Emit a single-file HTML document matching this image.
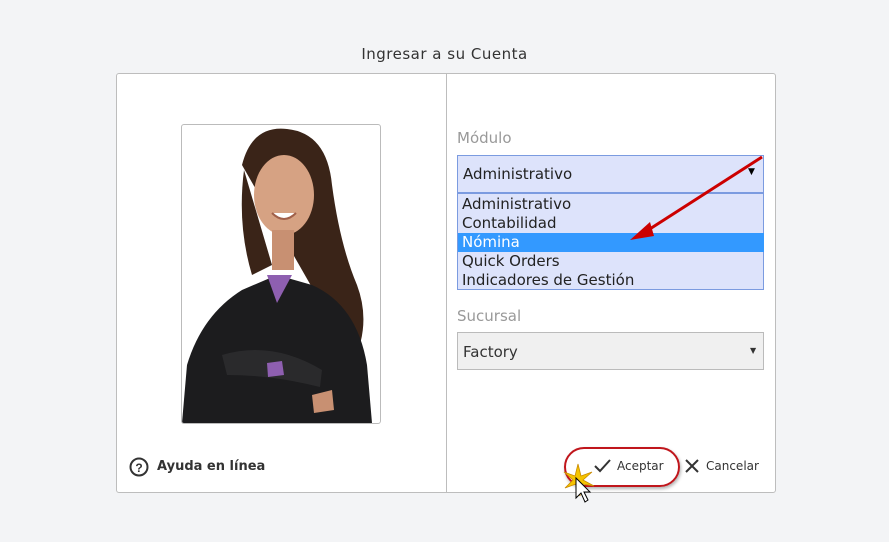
<!DOCTYPE html>
<html><head><meta charset="utf-8"><style>
body{margin:0;width:889px;height:542px;background:#f3f4f6;font-family:"DejaVu Sans","Liberation Sans",sans-serif;position:relative;overflow:hidden}
.a{position:absolute}
.t{left:0;width:889px;top:45px;text-align:center;font-size:15px;color:#333;letter-spacing:.5px}
.box{left:116px;top:73px;width:658px;height:418px;background:#fff;border:1px solid #bdbdbd;border-radius:3px}
.div{left:446px;top:74px;width:1px;height:418px;background:#bdbdbd}
.lbl{font-size:15px;color:#999}
.it{left:0;width:305px;height:19px;line-height:19px;padding-left:4px;font-size:15px;color:#222}
</style></head><body>
<div class="a t">Ingresar a su Cuenta</div>
<div class="a box"></div>
<div class="a div"></div>
<div class="a" style="left:181px;top:124px;width:198px;height:298px;border:1px solid #bbb;border-radius:3px;background:#fff;overflow:hidden">
<svg width="198" height="298" viewBox="0 0 198 298">
<path d="M60 40 Q70 0 105 4 Q145 8 150 60 Q158 120 175 160 Q190 200 170 240 L140 180 Z" fill="#3a2418"/>
<path d="M62 45 Q55 100 70 150 L90 140 Z" fill="#3a2418"/>
<path d="M0 298 L5 240 Q20 190 60 165 L95 150 L130 160 Q175 180 185 240 L190 298 Z" fill="#1c1c1e"/>
<path d="M85 150 L95 178 L110 150 Z" fill="#8e5fb0"/>
<ellipse cx="102" cy="70" rx="30" ry="40" fill="#d6a283"/>
<rect x="90" y="105" width="22" height="40" fill="#c89072"/>
<path d="M40 230 Q90 215 140 245 L138 262 Q90 250 45 250 Z" fill="#2a2a2c"/>
<path d="M85 238 L100 236 L102 250 L86 252 Z" fill="#8e5fb0"/>
<path d="M130 270 L150 265 L152 285 L132 288 Z" fill="#c89072"/>
<path d="M90 88 Q102 100 114 88" fill="#fff" stroke="#a0604a" stroke-width="2"/>
</svg></div>
<svg class="a" style="left:129px;top:457px" width="20" height="20"><circle cx="10" cy="10" r="8.5" fill="none" stroke="#333" stroke-width="2"/><text x="10" y="15" font-size="12" font-weight="bold" text-anchor="middle" fill="#333" font-family="Liberation Sans">?</text></svg>
<div class="a" style="left:157px;top:459px;font-size:13px;font-weight:bold;color:#333">Ayuda en línea</div>
<div class="a lbl" style="left:457px;top:129px">Módulo</div>
<div class="a" style="left:457px;top:155px;width:305px;height:36px;background:#dde3fb;border:1px solid #7b9be0"><span class="a" style="left:5px;top:9px;font-size:15px;color:#222">Administrativo</span><span class="a" style="left:290px;top:11px;font-size:9px">▼</span></div>
<div class="a" style="left:457px;top:193px;width:305px;height:95px;background:#dde3fb;border:1px solid #7b9be0">
<div class="a it" style="top:1px">Administrativo</div>
<div class="a it" style="top:20px">Contabilidad</div>
<div class="a it" style="top:39px;background:#3399ff;color:#fff;width:302px">Nómina</div>
<div class="a it" style="top:58px">Quick Orders</div>
<div class="a it" style="top:77px">Indicadores de Gestión</div>
</div>
<svg class="a" style="left:620px;top:150px" width="150" height="100"><line x1="142" y1="7" x2="22" y2="84" stroke="#c00" stroke-width="3"/><path d="M10 90 L30 72 L34 86 Z" fill="#c00"/></svg>
<div class="a lbl" style="left:457px;top:307px">Sucursal</div>
<div class="a" style="left:457px;top:332px;width:305px;height:36px;background:#f0f0f0;border:1px solid #bbb"><span class="a" style="left:5px;top:10px;font-size:15px;color:#333">Factory</span><span class="a" style="left:292px;top:13px;font-size:8px;color:#333">▼</span></div>
<div class="a" style="left:564px;top:447px;width:112px;height:36px;border:2px solid #c0161c;border-radius:20px;box-shadow:1px 2px 3px rgba(0,0,0,.3)"></div>
<svg class="a" style="left:594px;top:458px" width="18" height="16"><path d="M1 8 L6 13 L16 2" fill="none" stroke="#333" stroke-width="2"/></svg>
<div class="a" style="left:617px;top:459px;font-size:12px;color:#333">Aceptar</div>
<svg class="a" style="left:684px;top:458px" width="16" height="16"><path d="M2 2 L14 14 M14 2 L2 14" stroke="#333" stroke-width="2"/></svg>
<div class="a" style="left:706px;top:459px;font-size:12px;color:#333">Cancelar</div>
<svg class="a" style="left:562px;top:462px" width="40" height="44"><path d="M16 2 L19 14 L30 10 L21 18 L32 24 L20 22 L18 34 L14 22 L3 26 L11 18 L2 10 L13 14 Z" fill="#f5c400" stroke="#c98a00" stroke-width=".8"/><path d="M14 16 L14 36 L19 31 L23 40 L26 38 L22 30 L28 30 Z" fill="#fff" stroke="#000" stroke-width="1"/></svg>
</body></html>
